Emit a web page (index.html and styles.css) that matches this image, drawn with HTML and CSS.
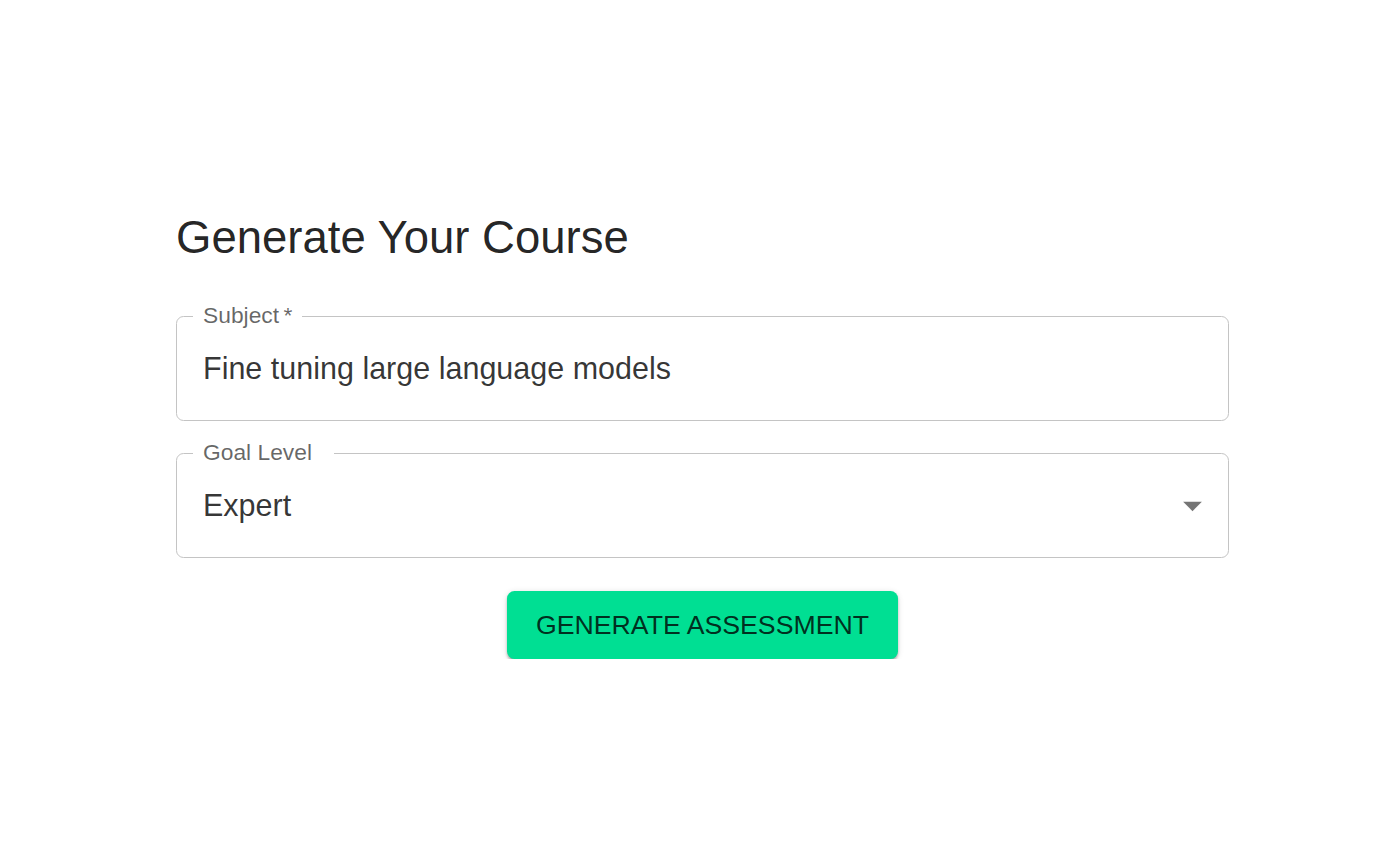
FILE: index.html
```html
<!DOCTYPE html>
<html lang="en">
<head>
<meta charset="utf-8">
<title>Generate Your Course</title>
<link rel="stylesheet" href="styles.css">
</head>
<body>
<main class="page">
  <section class="form">
    <h1 class="title">Generate Your Course</h1>
    <div class="field">
      <span class="label">Subject&thinsp;*</span>
      <span class="value">Fine tuning large language models</span>
    </div>
    <div class="field">
      <span class="label label-wide">Goal Level</span>
      <span class="value">Expert</span>
      <svg class="arrow" viewBox="0 0 24 24" aria-hidden="true"><path d="M7 10l5 5 5-5z"/></svg>
    </div>
    <div class="actions">
      <button class="btn" type="button">GENERATE ASSESSMENT</button>
    </div>
  </section>
</main>
</body>
</html>
```

FILE: styles.css
```css
html, body {
  margin: 0;
  padding: 0;
  background: #ffffff;
}

body {
  font-family: "Liberation Sans", Arial, sans-serif;
  color: rgba(0, 0, 0, 0.87);
}

.page {
  padding: 208px 0 0 176px;
}

.form {
  width: 1053px;
  display: flex;
  flex-direction: column;
}

.title {
  margin: 0 0 48px 0;
  font-size: 45.5px;
  line-height: 60px;
  font-weight: 400;
}

.field {
  position: relative;
  box-sizing: border-box;
  height: 105px;
  margin-bottom: 32px;
  border: 1px solid #c4c4c4;
  border-radius: 7.5px;
  padding: 0 26px;
  display: flex;
  align-items: center;
}

.label {
  position: absolute;
  top: -15px;
  left: 16px;
  padding: 0 10px 0 10px;
  background: #ffffff;
  font-size: 22.8px;
  line-height: 26px;
  color: rgba(0, 0, 0, 0.6);
}

.label-wide {
  padding-right: 22px;
}

.value {
  font-size: 30.5px;
  color: rgba(0, 0, 0, 0.8);
}

.arrow {
  position: absolute;
  right: 13px;
  top: 50%;
  width: 45px;
  height: 45px;
  margin-top: -22.5px;
  fill: rgba(0, 0, 0, 0.54);
}

.actions {
  display: flex;
  justify-content: center;
  margin-top: 1px;
}

.btn {
  border: 0;
  border-radius: 7.5px;
  background: #00df93;
  color: rgba(0, 0, 0, 0.8);
  font-family: "Liberation Sans", Arial, sans-serif;
  font-size: 26.7px;
  line-height: 46px;
  padding: 11px 29px;
  box-shadow: 0 3px 3px -1px rgba(0,0,0,0.22), 0 2px 3px 0 rgba(0,0,0,0.14), 0 1px 6px 0 rgba(0,0,0,0.12);
  cursor: pointer;
}
```
